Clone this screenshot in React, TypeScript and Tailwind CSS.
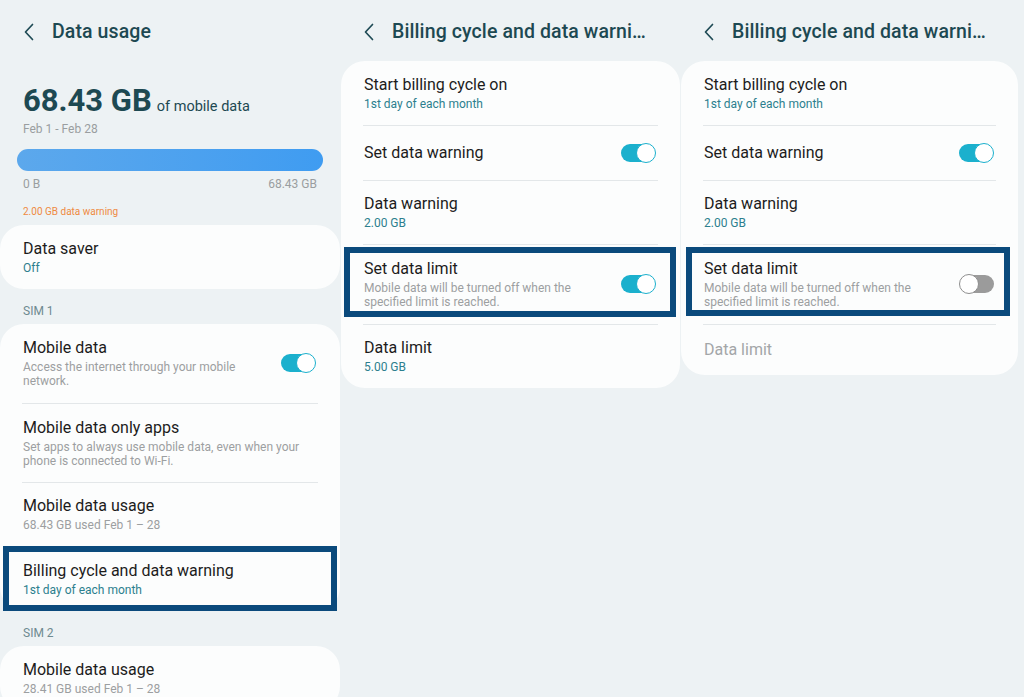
import React from "react";

const TEAL = "text-[#2c7f8e]";

function Chevron() {
  return (
    <svg width="12" height="18" viewBox="0 0 12 18" fill="none" className="shrink-0">
      <path d="M9.5 1.5 L2.5 9 L9.5 16.5" stroke="#1f4b55" strokeWidth="1.7" strokeLinecap="round" strokeLinejoin="round" />
    </svg>
  );
}

function Toggle({ on }: { on: boolean }) {
  if (on) {
    return (
      <div className="relative w-[35px] h-[20px] shrink-0">
        <div className="absolute left-0 right-[2px] top-[1px] bottom-[1px] rounded-full bg-[#1bb0cd]" />
        <div className="absolute right-0 top-0 w-[20px] h-[20px] rounded-full bg-white border-[1.5px] border-[#1bb0cd]" />
      </div>
    );
  }
  return (
    <div className="relative w-[35px] h-[20px] shrink-0">
      <div className="absolute left-[2px] right-0 top-[1px] bottom-[1px] rounded-full bg-[#9b9b9b]" />
      <div className="absolute left-0 top-0 w-[20px] h-[20px] rounded-full bg-white border-[1.5px] border-[#8e8e8e]" />
    </div>
  );
}

type RowProps = {
  title: string;
  sub?: string;
  subTone?: "teal" | "gray";
  toggle?: boolean;
  divider?: boolean;
  disabled?: boolean;
  box?: string;
  pad?: string;
};

function Row({ title, sub, subTone = "teal", toggle, divider = true, disabled, box, pad }: RowProps) {
  const padding = pad ?? (sub ? "pt-[13px] pb-[14px]" : "py-[17px]");
  return (
    <div className="relative">
      {divider && <div className="mx-[22px] h-px bg-[#e3e7e9]" />}
      <div className={`flex items-center gap-4 pl-[23px] pr-[24px] ${padding}`}>
        <div className="flex-1 min-w-0">
          <div className={`text-[16px] leading-[20px] ${disabled ? "text-[#a3a6a8]" : "text-[#1c1c1c]"}`}>{title}</div>
          {sub && (
            <div
              className={`mt-[2px] text-[12px] leading-[14px] ${
                subTone === "teal" ? TEAL : "text-[#9c9fa1]"
              }`}
            >
              {sub}
            </div>
          )}
        </div>
        {toggle !== undefined && <Toggle on={toggle} />}
      </div>
      {box && <div className={`absolute border-[6px] border-[#0b4a7c] ${box}`} />}
    </div>
  );
}

function Header({ title }: { title: string }) {
  return (
    <div className="flex items-center gap-[17px] pl-[23px] pr-[26px] h-[62px] pt-[1px]">
      <Chevron />
      <div className="min-w-0 truncate text-[19.5px] font-medium text-[#1d4952] tracking-[0.1px]">{title}</div>
    </div>
  );
}

function Card({ children, className = "" }: { children: React.ReactNode; className?: string }) {
  return <div className={`bg-[#fcfdfd] rounded-[24px] ${className}`}>{children}</div>;
}

function SectionLabel({ label }: { label: string }) {
  return <div className="pl-[23px] pt-[15px] pb-[6px] text-[12px] leading-[14px] text-[#6e8a90]">{label}</div>;
}

function UsagePanel() {
  return (
    <div className="w-[340px] shrink-0">
      <Header title="Data usage" />
      <div className="pl-[23px] pr-[22px] pt-[22px]">
        <div className="flex items-baseline gap-[5px] text-[#1d4952]">
          <span className="text-[31px] leading-[34px] font-bold">68.43 GB</span>
          <span className="text-[14.5px]">of mobile data</span>
        </div>
        <div className="mt-[4px] text-[12px] leading-[14px] text-[#9a9ea0]">Feb 1 - Feb 28</div>
      </div>
      <div className="px-[17px] pt-[13px]">
        <div className="h-[22px] rounded-full bg-gradient-to-r from-[#5ca8ec] to-[#3f9cf1]" />
        <div className="flex justify-between px-[6px] mt-[6px] text-[12px] leading-[14px] text-[#9a9ea0]">
          <span>0 B</span>
          <span>68.43 GB</span>
        </div>
        <div className="px-[6px] mt-[15px] text-[10px] leading-[12px] text-[#ef8a42]">2.00 GB data warning</div>
      </div>
      <Card className="mt-[7px]">
        <Row title="Data saver" sub="Off" divider={false} pad="pt-[14px] pb-[14px]" />
      </Card>
      <SectionLabel label="SIM 1" />
      <Card>
        <Row
          title="Mobile data"
          sub="Access the internet through your mobile network."
          subTone="gray"
          toggle={true}
          divider={false}
          pad="pt-[14px] pb-[15px]"
        />
        <Row
          title="Mobile data only apps"
          sub="Set apps to always use mobile data, even when your phone is connected to Wi-Fi."
          subTone="gray"
          pad="pt-[14px] pb-[14px]"
        />
        <Row title="Mobile data usage" sub="68.43 GB used Feb 1 – 28" subTone="gray" />
        <Row
          title="Billing cycle and data warning"
          sub="1st day of each month"
          divider={false}
          pad="pt-[15px] pb-[14px]"
          box="left-[3px] right-[3px] top-0 bottom-0"
        />
      </Card>
      <SectionLabel label="SIM 2" />
      <Card>
        <Row title="Mobile data usage" sub="28.41 GB used Feb 1 – 28" subTone="gray" divider={false} pad="pt-[14px] pb-[14px]" />
      </Card>
    </div>
  );
}

function BillingPanel({ limitOn }: { limitOn: boolean }) {
  return (
    <div className="w-[340px] shrink-0">
      <Header title="Billing cycle and data warning" />
      <Card className={limitOn ? "ml-[1px] -mt-[1px]" : "ml-[1px] mr-[2px] -mt-[1px]"}>
        <Row title="Start billing cycle on" sub="1st day of each month" divider={false} pad="pt-[14px] pb-[14px]" />
        <Row title="Set data warning" toggle={true} />
        <Row title="Data warning" sub="2.00 GB" />
        <Row
          title="Set data limit"
          sub="Mobile data will be turned off when the specified limit is reached."
          subTone="gray"
          toggle={limitOn}
          pad="pt-[14px] pb-[15px]"
          box={limitOn ? "left-[3px] right-[4px] top-[3px] bottom-[7px]" : "left-[5px] right-[8px] top-[3px] bottom-[8px]"}
        />
        {limitOn ? (
          <Row title="Data limit" sub="5.00 GB" />
        ) : (
          <Row title="Data limit" disabled pad="pt-[15px] pb-[15px]" />
        )}
      </Card>
    </div>
  );
}

export default function App() {
  return (
    <div
      className="w-[1024px] h-[697px] overflow-hidden flex items-start bg-[#edf2f4]"
      style={{ fontFamily: "Roboto, 'Noto Sans', sans-serif" }}
    >
      <UsagePanel />
      <BillingPanel limitOn={true} />
      <div className="w-[344px] shrink-0">
        <BillingPanel limitOn={false} />
      </div>
    </div>
  );
}
